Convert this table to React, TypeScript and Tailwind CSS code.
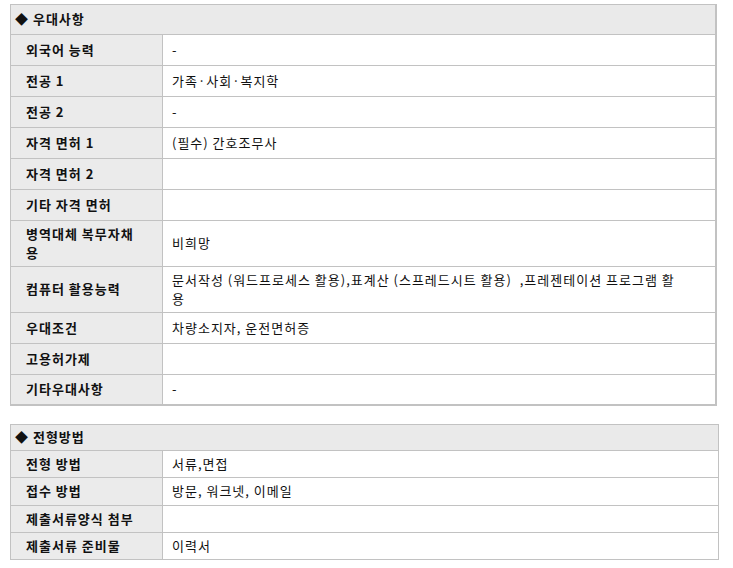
import type { ReactNode } from 'react';

type Row = { label: ReactNode; value?: ReactNode; h: string };

const preferRows: Row[] = [
  { label: '외국어 능력', value: '-', h: 'h-[30px]' },
  { label: '전공 1', value: '가족·사회·복지학', h: 'h-[30px]' },
  { label: '전공 2', value: '-', h: 'h-[30px]' },
  { label: '자격 면허 1', value: '(필수) 간호조무사', h: 'h-[30px]' },
  { label: '자격 면허 2', h: 'h-[30px]' },
  { label: '기타 자격 면허', h: 'h-[30px]' },
  {
    label: (
      <>
        병역대체 복무자채
        <br />용
      </>
    ),
    value: '비희망',
    h: 'h-[45px]',
  },
  {
    label: '컴퓨터 활용능력',
    value: (
      <>
        문서작성 (워드프로세스 활용),표계산 (스프레드시트 활용)&nbsp; ,프레젠테이션 프로그램 활
        <br />용
      </>
    ),
    h: 'h-[45px]',
  },
  { label: '우대조건', value: '차량소지자, 운전면허증', h: 'h-[30px]' },
  { label: '고용허가제', h: 'h-[30px]' },
  { label: '기타우대사항', value: '-', h: 'h-[29px]' },
];

const selectRows: Row[] = [
  { label: '전형 방법', value: '서류,면접', h: 'h-[26px]' },
  { label: '접수 방법', value: '방문, 워크넷, 이메일', h: 'h-[27px]' },
  { label: '제출서류양식 첨부', h: 'h-[26px]' },
  { label: '제출서류 준비물', value: '이력서', h: 'h-[26px]' },
];

function InfoTable({
  title,
  rows,
  headH,
  className,
}: {
  title: string;
  rows: Row[];
  headH: string;
  className: string;
}) {
  return (
    <div className={`border-[#c2c2c2] ${className}`}>
      <div className={`${headH} flex items-center pl-[4px] pb-[2px] bg-[#eaeaea] border-b border-[#c2c2c2] font-bold`}>
        ◆ {title}
      </div>
      {rows.map((r, i) => (
        <div
          key={i}
          className={`grid grid-cols-[152px_1fr] ${i < rows.length - 1 ? 'border-b border-[#c2c2c2]' : ''}`}
        >
          <div className={`${r.h} flex items-center pl-[15px] pb-[2px] bg-[#ebebeb] border-r border-[#c2c2c2] font-bold leading-[19px]`}>
            <div>{r.label}</div>
          </div>
          <div className={`${r.h} flex items-center pl-[9px] pb-[2px] leading-[19px]`}>
            <div>{r.value}</div>
          </div>
        </div>
      ))}
    </div>
  );
}

export default function App() {
  return (
    <div className="bg-white min-h-[568px] pl-[10px] pt-[4px] text-[13px] tracking-[1px] text-[#111] font-['Noto_Sans_CJK_KR','Liberation_Sans',sans-serif]">
      <InfoTable
        title="우대사항"
        rows={preferRows}
        headH="h-[30px]"
        className="w-[707px] border-t border-l border-r-2 border-b-2"
      />
      <div className="h-[18px]" />
      <InfoTable
        title="전형방법"
        rows={selectRows}
        headH="h-[26px]"
        className="w-[709px] border"
      />
    </div>
  );
}
